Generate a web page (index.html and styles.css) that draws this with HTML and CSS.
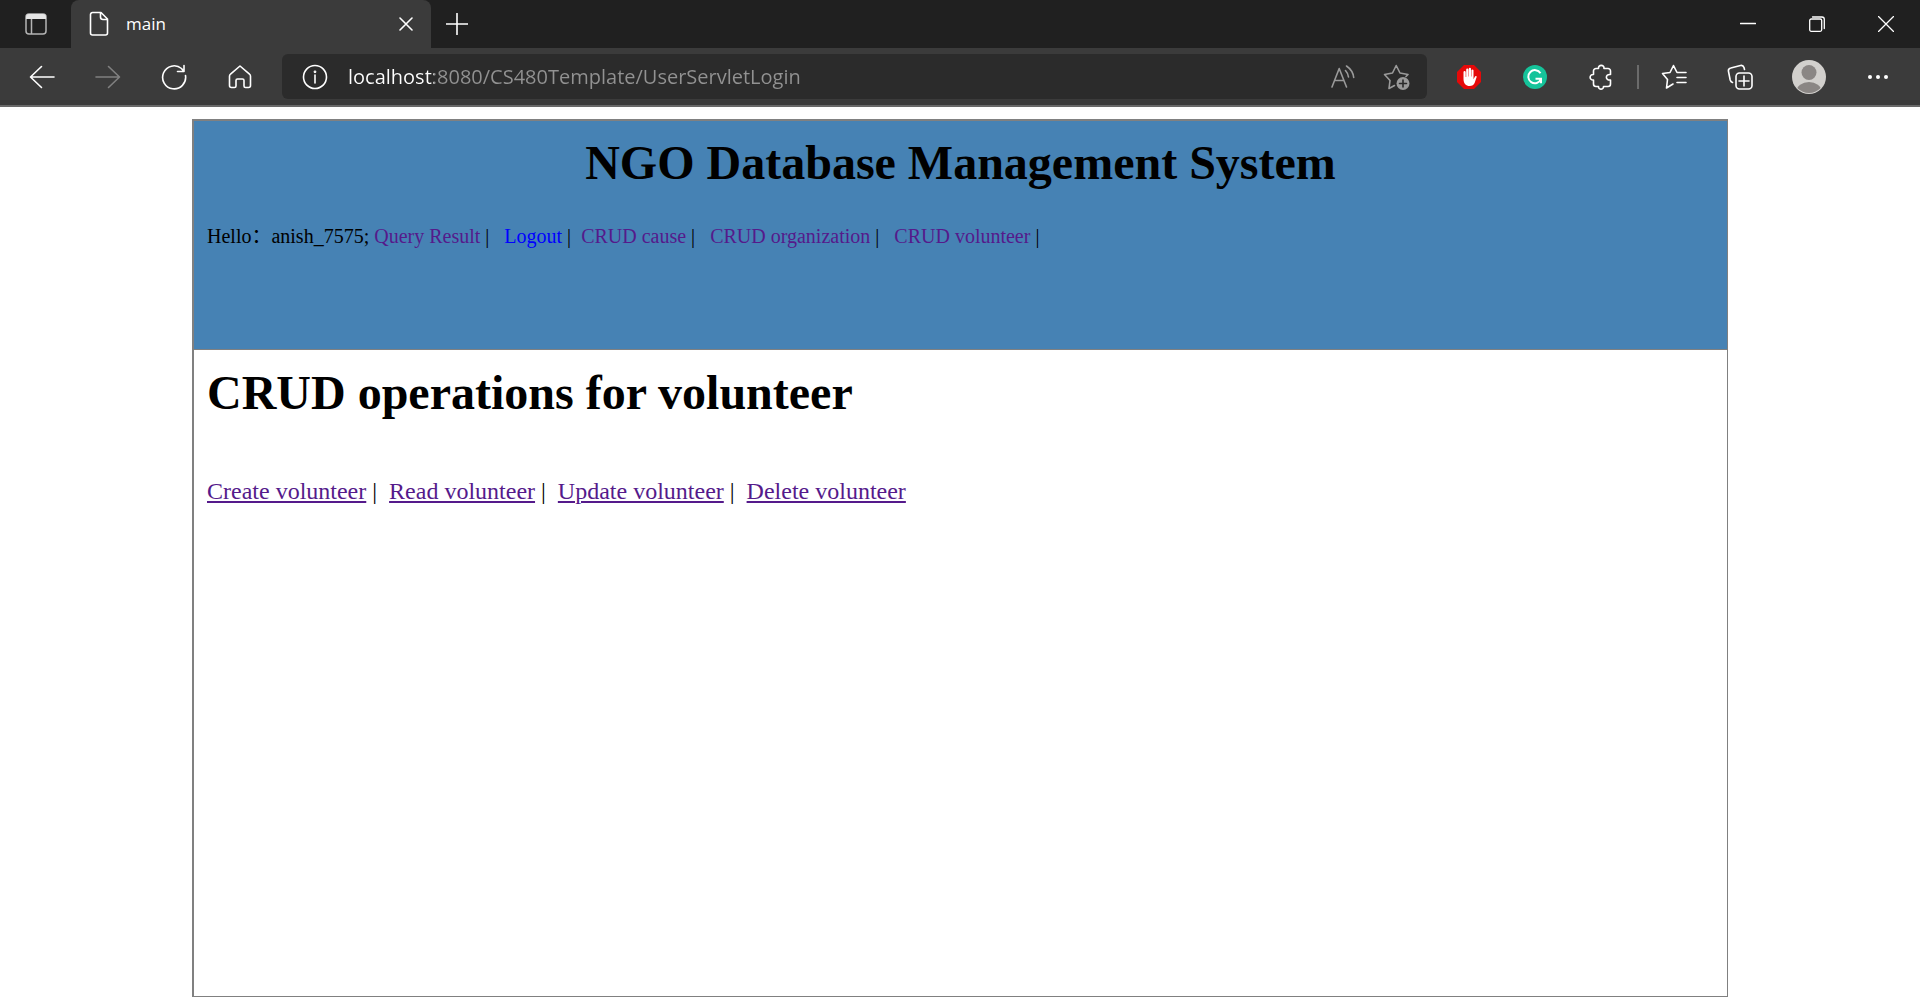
FILE: index.html
```html
<!DOCTYPE html>
<html lang="en">
<head>
<meta charset="utf-8">
<title>main</title>
<link rel="stylesheet" href="styles.css">
</head>
<body>
<div class="window">
  <div class="tab-strip">
    <button class="tab-actions" aria-label="Tab actions menu">
      <svg width="22" height="22" viewBox="0 0 22 22"><rect x="1" y="1" width="20" height="20" rx="3" fill="none" stroke="#b4b4b4" stroke-width="1.5"/><path d="M1 6V4a3 3 0 0 1 3-3h14a3 3 0 0 1 3 3v2z" fill="#e6e6e6"/><path d="M6.5 6v15" stroke="#b4b4b4" stroke-width="1.5"/></svg>
    </button>
    <div class="tab">
      <svg width="20" height="26" viewBox="0 0 20 26" class="line"><path d="M3.500 1.500H12l6.500 6.500v14a2 2 0 0 1-2 2H3.500a2 2 0 0 1-2-2V3.500a2 2 0 0 1 2-2M11.500 1.500V6a2.500 2.500 0 0 0 2.500 2.500h4.500"/></svg>
      <span class="tab-title">main</span>
      <button class="tab-close" aria-label="Close tab"><svg width="14" height="14" viewBox="0 0 14 14" class="line"><path d="M1 1l12 12M13 1L1 13"/></svg></button>
    </div>
    <button class="new-tab" aria-label="New tab"><svg width="22" height="22" viewBox="0 0 22 22" class="line"><path d="M11 .5v21M.5 11h21"/></svg></button>
    <div class="window-controls">
      <button aria-label="Minimize"><svg width="16" height="16" viewBox="0 0 16 16" class="line thin"><path d="M.5 7.500h15"/></svg></button>
      <button aria-label="Restore"><svg width="16" height="16" viewBox="0 0 16 16" class="line thin"><rect x=".7" y="3" width="12" height="12.300" rx="1.500"/><path d="M3.500 1h9.500a2.300 2.300 0 0 1 2.300 2.300v9.200"/></svg></button>
      <button aria-label="Close"><svg width="16" height="16" viewBox="0 0 16 16" class="line thin"><path d="M.5.5l15 15M15.500.5l-15 15"/></svg></button>
    </div>
  </div>

  <div class="toolbar">
    <div class="group">
      <button aria-label="Back"><svg width="26" height="24" viewBox="0 0 26 24" class="line"><path d="M25 12H2M12.500 1.500L1.500 12l11 10.500"/></svg></button>
      <button aria-label="Forward" disabled><svg width="26" height="24" viewBox="0 0 26 24" class="line dim"><path d="M1 12h23M13.500 1.500l11 10.500-11 10.500"/></svg></button>
      <button aria-label="Refresh"><svg width="26" height="26" viewBox="0 0 26 26" class="line"><path d="M24.500 11.500A11.500 11.500 0 1 1 20.500 4.500L22.500 7M23 1.500V7.500H16.500"/></svg></button>
      <button aria-label="Home"><svg width="24" height="26" viewBox="0 0 24 26" class="line"><path d="M12 2L2.500 10.200A2.500 2.500 0 0 0 1.500 12.200V21.500A2 2 0 0 0 3.500 23.500H6.500A1.500 1.500 0 0 0 8 22V16.500A1.500 1.500 0 0 1 9.500 15h5A1.500 1.500 0 0 1 16 16.500V22a1.500 1.500 0 0 0 1.500 1.500h3a2 2 0 0 0 2-2v-9.300a2.500 2.500 0 0 0-1-2z"/></svg></button>
    </div>
    <div class="address">
      <button class="site-info" aria-label="View site information"><svg width="26" height="26" viewBox="0 0 26 26" class="line"><circle cx="13" cy="13" r="11.500"/><path d="M13 11v8"/><circle cx="13" cy="7.800" r=".6"/></svg></button>
      <input class="url" type="text" aria-label="Address" value="localhost:8080/CS480Template/UserServletLogin">
      <button aria-label="Read aloud"><svg width="24" height="24" viewBox="0 0 24 24" class="line muted"><path d="M1 22L8.200 3.500 15.500 22M3.500 15.500h9.500M14.500 5.500Q17.200 8.500 17.500 12M15.500 1Q22 5.500 22.700 12.500"/></svg></button>
      <button aria-label="Add this page to favorites"><svg width="28" height="28" viewBox="0 0 28 28" class="line muted"><path d="M11.500 22.500L6 25.500 7 17.500 1.500 11.500 9.500 10 13.200 2.500 17 10l8 1.500-2 2"/><circle cx="20" cy="20.500" r="6.500" fill="#9a9a9a" stroke="none"/><path d="M20 17v7M16.500 20.500h7" stroke="#2b2b2b"/></svg></button>
    </div>
    <div class="group">
      <button aria-label="Ad blocker"><svg width="24" height="24" viewBox="0 0 24 24"><path d="M7 0h10l7 7v10l-7 7H7l-7-7V7z" fill="#e50909"/><path d="M6.500 14V7.200a1.100 1.100 0 0 1 2.200 0V12h.5V4.600a1.100 1.100 0 0 1 2.200 0V11.500h.4V3.800a1.100 1.100 0 0 1 2.200 0v7.700h.4V5.300a1.100 1.100 0 0 1 2.100 0V14.300l1.500-2.800c.5-1 2-.5 1.600.7L17.600 18c-.8 2-2.400 3-5 3-3.600 0-6.100-2.500-6.100-7z" fill="#fff"/></svg></button>
      <button aria-label="Writing assistant"><svg width="24" height="24" viewBox="0 0 24 24"><circle cx="12" cy="12" r="12" fill="#15c39a"/><path d="M17.500 8.200A6.600 6.600 0 1 0 18 14.200M12.500 13.800h5.500v4.500" fill="none" stroke="#fff" stroke-width="2"/></svg></button>
      <button aria-label="Extensions"><svg width="24" height="26" viewBox="0 0 24 26" class="line"><path d="M7 4.500H9.500C9 .3 15.500.3 15 4.500h4a2.500 2.500 0 0 1 2.500 2.500V10.500c-5.500-.8-5.500 6.300 0 5.500V20a2.500 2.500 0 0 1-2.500 2.500H14.500c.3 3.500-5.300 3.500-5 0H7A2.500 2.500 0 0 1 4.500 20V16c-4.500.5-4.500-6 0-5.500V7A2.500 2.500 0 0 1 7 4.500"/></svg></button>
    </div>
    <span class="divider"></span>
    <div class="group">
      <button aria-label="Favorites"><svg width="26" height="26" viewBox="0 0 26 26" class="line"><path d="M12 20L5.500 24l1-8.500L1.500 9.500 9 8.500 12.500 1.500 16 8.500h9M16 13.500h9M16 18.500h9"/></svg></button>
      <button aria-label="Collections"><svg width="26" height="26" viewBox="0 0 26 26" class="line"><rect x="9" y="9" width="16" height="16" rx="3.500"/><path d="M17 12v10M12 17h10M5.500 18.500C4 18 3.500 17 3.200 16L1.500 7.500A3 3 0 0 1 3.800 4L13.500 1.500A3 3 0 0 1 17 3.500L17.500 5.500"/></svg></button>
    </div>
    <div class="group account">
      <button aria-label="Profile"><svg width="34" height="34" viewBox="0 0 34 34"><defs><clipPath id="disc"><circle cx="17" cy="17" r="16"/></clipPath></defs><circle cx="17" cy="17" r="17" fill="#d2d0cd"/><circle cx="17" cy="12.500" r="7.500" fill="#8a8684"/><ellipse cx="17" cy="31" rx="12.500" ry="9" fill="#8a8684" clip-path="url(#disc)"/></svg></button>
      <button aria-label="Settings and more"><svg width="20" height="4" viewBox="0 0 20 4" fill="#fff"><circle cx="2" cy="2" r="2"/><circle cx="10" cy="2" r="2"/><circle cx="18" cy="2" r="2"/></svg></button>
    </div>
  </div>

  <main class="page">
    <div class="frame">
      <header class="banner">
        <h1 class="centered">NGO Database Management System</h1>
        <nav class="menu">Hello：anish_7575; <a href="#">Query Result</a> | &nbsp; <a href="#" class="logout">Logout</a> |&nbsp; <a href="#">CRUD cause</a> | &nbsp; <a href="#">CRUD organization</a> | &nbsp; <a href="#">CRUD volunteer</a> |</nav>
      </header>
      <section class="content">
        <h1>CRUD operations for volunteer</h1>
        <p class="operations"><a href="#">Create volunteer</a> |&nbsp; <a href="#">Read volunteer</a> |&nbsp; <a href="#">Update volunteer</a> |&nbsp; <a href="#">Delete volunteer</a></p>
      </section>
    </div>
  </main>
</div>
</body>
</html>
```
FILE: styles.css
```css
* { box-sizing: border-box; }

body {
  margin: 0;
  background: #fff;
  color: #000;
  font-family: "Liberation Serif", "Noto Sans CJK SC", serif;
}

.window {
  display: flex;
  flex-direction: column;
  min-height: 100vh;
}

button {
  display: flex;
  align-items: center;
  justify-content: center;
  padding: 0;
  border: 0;
  background: none;
}

.line {
  fill: none;
  stroke: #fff;
  stroke-width: 1.6;
  stroke-linecap: round;
  stroke-linejoin: round;
}
.thin { stroke-width: 1.3; }
.dim { stroke: #808080; }
.muted { stroke: #9a9a9a; }

/* Tab strip */
.tab-strip {
  display: flex;
  height: 48px;
  background: #202020;
  font-family: "Open Sans", "Noto Sans", sans-serif;
}
.tab-strip button { padding-bottom: 1px; }
.tab-actions { width: 71px; }
.tab {
  display: flex;
  align-items: center;
  width: 360px;
  padding: 0 12px 0 18px;
  border-radius: 8px 8px 0 0;
  background: #3b3b3b;
}
.tab-title {
  flex: 1;
  padding: 0 0 2px 17px;
  color: #fff;
  font-size: 17px;
}
.tab-close { width: 26px; height: 26px; }
.new-tab { width: 52px; }
.window-controls {
  display: flex;
  margin-left: auto;
}
.window-controls button { width: 69px; }

/* Toolbar */
.toolbar {
  display: flex;
  align-items: center;
  height: 59px;
  padding: 0 15px;
  border-bottom: 2px solid #696969;
  background: #3b3b3b;
}
.group { display: flex; gap: 12px; }
.account { gap: 15px; margin-left: 15px; }
.toolbar button { width: 54px; height: 45px; }
.address {
  display: flex;
  flex: 1;
  align-items: center;
  height: 45px;
  margin: 0 15px;
  padding: 0 3px 0 6px;
  border-radius: 6px;
  background: #2b2b2b;
}
.url {
  flex: 1;
  min-width: 0;
  height: 45px;
  padding: 0 0 0 6px;
  border: 0;
  outline: 0;
  background: linear-gradient(90deg, #fff 92px, #929292 92px);
  background-clip: text;
  -webkit-background-clip: text;
  color: transparent;
  font: 20px "Open Sans", "Noto Sans", sans-serif;
}
.divider {
  width: 2px;
  height: 24px;
  margin: 0 8px 0 9px;
  background: #6b6b6b;
}

/* Page */
.page {
  display: flex;
  flex: 1;
  padding: 12px 10% 9px;
}
.frame {
  display: flex;
  flex: 1;
  flex-direction: column;
  border: 1px solid #808080;
  border-width: 2px 1px 1px 2px;
}
.banner {
  min-height: 229px;
  padding: 14px 13px;
  border-bottom: 1px solid #808080;
  background: #4682b4;
}
.content { padding: 15px 13px; }

h1 {
  margin: 0;
  font-size: 48px;
  line-height: 56px;
}
.centered { text-align: center; }
.menu {
  margin-top: 30px;
  font-size: 20px;
  line-height: 30px;
}
.menu a { color: #551a8b; text-decoration: none; }
.menu .logout { color: #00f; }
.operations {
  margin: 56px 0 0;
  font-size: 24px;
  line-height: 28px;
}
.operations a { color: #551a8b; }
```
